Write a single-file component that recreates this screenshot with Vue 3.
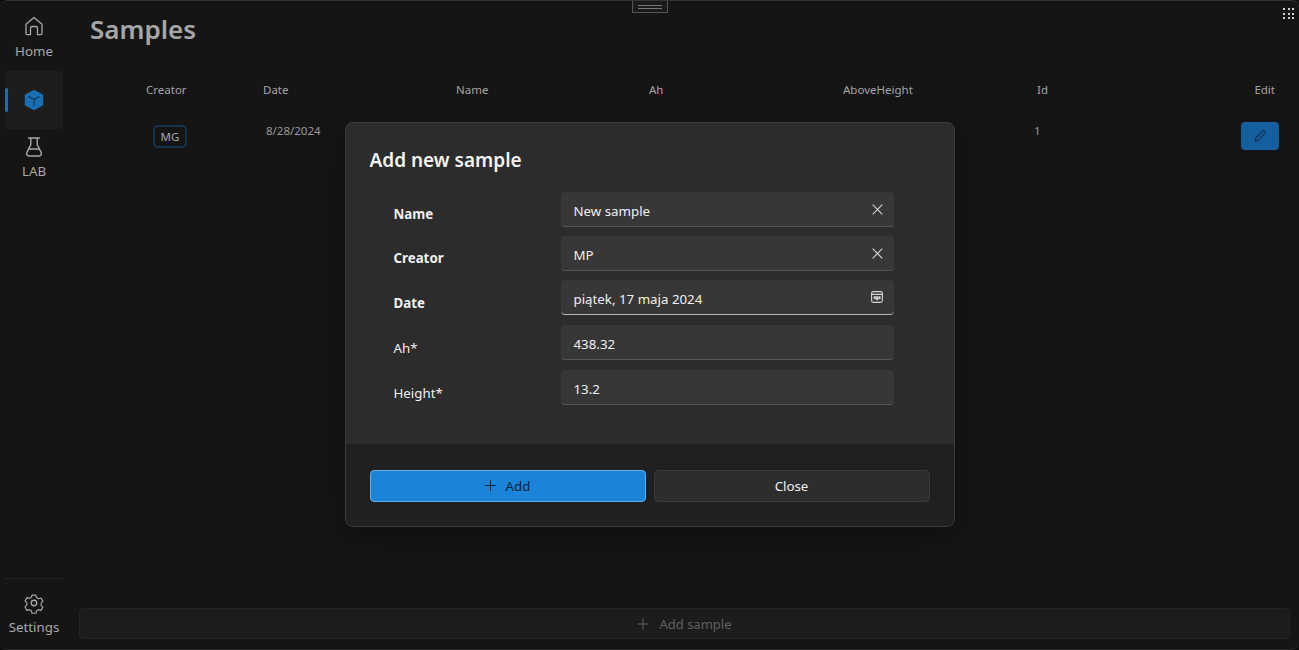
<template>
  <div class="app">
    <aside class="sidebar">
      <div class="nav-top">
        <div class="nav-item home">
          <svg width="22" height="22" viewBox="0 0 22 22" fill="none" stroke="currentColor" stroke-width="1.3" stroke-linejoin="round">
            <path d="M3 9.2 11 2.6l8 6.6v9.1a1.3 1.3 0 0 1-1.3 1.3h-3.2v-6.3a1.8 1.8 0 0 0-1.8-1.8H9.3a1.8 1.8 0 0 0-1.8 1.8v6.3H4.3A1.3 1.3 0 0 1 3 18.3z" />
          </svg>
          <span>Home</span>
        </div>
        <div class="nav-active">
          <i class="indicator"></i>
          <svg width="22" height="22" viewBox="0 0 22 22">
            <path d="M11 .8 20.2 5.8v10.4L11 21.2 1.8 16.2V5.8z" fill="#1a6fb4" />
            <path d="M6 7.6l5 3 5-3M11 10.600v5.600" fill="none" stroke="#0d3a5e" stroke-width="1.3" stroke-linecap="round" />
          </svg>
        </div>
        <div class="nav-item lab">
          <svg width="20" height="22" viewBox="0 0 20 22" fill="none" stroke="currentColor" stroke-width="1.4" stroke-linejoin="round" stroke-linecap="round">
            <path d="M4.5 2h11M6.800 2v6.600L2.900 16.400c-.9 1.900.1 3.600 2.200 3.600h9.800c2.100 0 3.100-1.700 2.200-3.600L13.200 8.600V2M5.200 13h9.600" />
          </svg>
          <span>LAB</span>
        </div>
      </div>
      <div class="nav-bottom">
        <div class="nav-item settings">
          <svg width="22" height="22" viewBox="0 0 24 24" fill="none" stroke="currentColor" stroke-width="1.4" stroke-linejoin="round">
            <circle cx="12" cy="12" r="3" />
            <path d="M9.600 2.400h4.800l.7 3 2.500 1.400 3-.9 2.400 4.100-2.300 2.100v2.800l2.300 2.100-2.400 4.100-3-.9-2.500 1.400-.7 3H9.600l-.7-3-2.500-1.400-3 .9L1 16.500l2.300-2.100v-2.800L1 9.500l2.400-4.100 3 .9 2.500-1.400z" transform="translate(1.300 1.300) scale(.89)" />
          </svg>
          <span>Settings</span>
        </div>
      </div>
    </aside>

    <main class="content">
      <h1 class="page-title">Samples</h1>
      <div class="table-head">
        <span v-for="col in columns" :key="col">{{ col }}</span>
      </div>
      <div class="table-row">
        <span class="badge">MG</span>
        <span class="cell-text">8/28/2024</span>
        <span class="cell-text">1</span>
        <button class="btn-edit">
          <svg width="14" height="14" viewBox="0 0 14 14" fill="none" stroke="#0c3558" stroke-width="1.2" stroke-linejoin="round">
            <path d="M2 12l.7-3L9.600 2.100a1.300 1.300 0 0 1 1.900 0l.4.400a1.300 1.300 0 0 1 0 1.900L5 11.300z" />
          </svg>
        </button>
      </div>
      <div class="spacer"></div>
      <div class="add-bar">
        <svg width="12" height="12" viewBox="0 0 12 12" stroke="currentColor" stroke-width="1"><path d="M6 .5v11M.5 6h11" /></svg>
        <span>Add sample</span>
      </div>
    </main>

    <div class="drag-handle"><i></i><i></i></div>
    <div class="dots">
      <i v-for="n in 9" :key="n"></i>
    </div>

    <div class="overlay">
      <div class="dialog">
        <div class="dialog-body">
          <h2>Add new sample</h2>
          <div v-for="f in fields" :key="f.label" class="form-row">
            <label :class="{ strong: f.strong }">{{ f.label }}</label>
            <div class="field" :class="{ focused: f.icon === 'date' }">
              <span>{{ f.value }}</span>
              <svg v-if="f.icon === 'clear'" width="11" height="11" viewBox="0 0 11 11" stroke="#d0d0d0" stroke-width="1.2"><path d="M.7.7l9.600 9.600M10.300.7.700 10.300" /></svg>
              <svg v-if="f.icon === 'date'" width="12" height="12" viewBox="0 0 12 12" fill="none" stroke="#d8d8d8" stroke-width="1.1">
                <rect x=".6" y=".6" width="10.800" height="10.800" rx="1.800" />
                <path d="M.6 3.400h10.800M3.200 5.800h1v2h-1zM5.600 5.800h1v3h-1zM8 5.800h1v2H8z" />
              </svg>
            </div>
          </div>
        </div>
        <div class="dialog-footer">
          <button class="btn btn-primary">
            <svg width="11" height="11" viewBox="0 0 11 11" stroke="currentColor" stroke-width="1"><path d="M5.500 0v11M0 5.500h11" /></svg>
            <span>Add</span>
          </button>
          <button class="btn btn-close">Close</button>
        </div>
      </div>
    </div>
  </div>
</template>

<script setup>
const columns = ['Creator', 'Date', 'Name', 'Ah', 'AboveHeight', 'Id', 'Edit']

const fields = [
  { label: 'Name', value: 'New sample', strong: true, icon: 'clear' },
  { label: 'Creator', value: 'MP', strong: true, icon: 'clear' },
  { label: 'Date', value: 'piątek, 17 maja 2024', strong: true, icon: 'date' },
  { label: 'Ah*', value: '438.32' },
  { label: 'Height*', value: '13.2' }
]
</script>

<style>
html,
body {
  margin: 0;
  background: #0e0e0e;
}
</style>

<style scoped>
.app {
  position: relative;
  width: 1299px;
  height: 650px;
  display: flex;
  overflow: hidden;
  background: #151515;
  color: #a8a8a8;
  font-family: "Noto Sans", "Open Sans", sans-serif;
  font-size: 11.5px;
  box-sizing: border-box;
  border-top: 1px solid #333;
  border-bottom: 1px solid #2b2b2b;
  border-radius: 8px;
}

.sidebar {
  width: 68px;
  flex-shrink: 0;
  display: flex;
  flex-direction: column;
  justify-content: space-between;
  background: #161514;
}

.nav-top {
  display: flex;
  flex-direction: column;
  align-items: center;
}

.nav-item {
  display: flex;
  flex-direction: column;
  align-items: center;
  font-size: 13.3px;
  line-height: 18px;
}

.nav-item.home {
  height: 70px;
  padding-top: 14px;
  gap: 5px;
  box-sizing: border-box;
}

.nav-item.lab {
  padding-top: 7px;
  gap: 4px;
}

.nav-active {
  position: relative;
  width: 58px;
  height: 58px;
  display: flex;
  align-items: center;
  justify-content: center;
  background: #1f1d1b;
  border-radius: 4px;
}

.indicator {
  position: absolute;
  left: 0;
  top: 17px;
  width: 3px;
  height: 24px;
  border-radius: 2px;
  background: #1a6fb4;
}

.nav-bottom {
  margin: 0 4px;
  border-top: 1px solid #242424;
  height: 71px;
  display: flex;
  justify-content: center;
  padding-top: 13px;
  box-sizing: border-box;
}

.nav-item.settings {
  gap: 4px;
}

.content {
  flex: 1;
  display: flex;
  flex-direction: column;
  padding: 0 9px 10px 0;
  min-width: 0;
}

.page-title {
  margin: 10px 0 0 22px;
  font-size: 26px;
  line-height: 37px;
  font-weight: 600;
  color: #a6a6a6;
}

.table-head {
  display: grid;
  grid-template-columns: 117px 193px 193px 194px 194px 1fr auto;
  padding: 0 15px 0 78px;
  margin-top: 33px;
  line-height: 18px;
  color: #a4a4a4;
}

.table-row {
  display: grid;
  grid-template-columns: 113px 768px 1fr auto;
  padding: 0 11px 0 85px;
  margin-top: 23px;
  align-items: start;
  color: #999;
}

.badge {
  width: 34px;
  height: 23px;
  margin-top: 3px;
  box-sizing: border-box;
  display: flex;
  align-items: center;
  justify-content: center;
  border: 2px solid #17334b;
  border-radius: 5px;
  color: #a8a8a8;
}

.cell-text {
  line-height: 16px;
  margin-top: 1px;
}

.btn-edit {
  width: 38px;
  height: 28px;
  padding: 0;
  display: flex;
  align-items: center;
  justify-content: center;
  border: none;
  border-radius: 4px;
  background: #14609f;
}

.spacer {
  flex: 1;
}

.add-bar {
  margin-left: 11px;
  height: 31px;
  display: flex;
  align-items: center;
  justify-content: center;
  gap: 10px;
  border: 1px solid #232323;
  border-radius: 4px;
  background: #1c1c1c;
  color: #5f5f5f;
  font-size: 13px;
  box-sizing: border-box;
}

.drag-handle {
  position: absolute;
  left: 632px;
  top: -1px;
  width: 36px;
  height: 13px;
  display: flex;
  flex-direction: column;
  align-items: center;
  justify-content: center;
  gap: 2px;
  border: 1px solid #555;
  box-sizing: border-box;
  background: #1b1b1b;
}

.drag-handle i {
  display: block;
  width: 24px;
  height: 1px;
  background: #777;
}

.dots {
  position: absolute;
  right: 5px;
  top: 7px;
  display: grid;
  grid-template-columns: repeat(3, 2px);
  gap: 2.5px;
}

.dots i {
  display: block;
  width: 2px;
  height: 2px;
  background: #d0d0d0;
}

.overlay {
  position: absolute;
  inset: 0 0 2px;
  display: flex;
  align-items: center;
  justify-content: center;
}

.dialog {
  width: 610px;
  height: 405px;
  display: flex;
  flex-direction: column;
  border: 1px solid #3c3c3c;
  border-radius: 8px;
  box-sizing: border-box;
  overflow: hidden;
  background: #2c2c2c;
  color: #fff;
  box-shadow: 0 8px 32px rgba(0, 0, 0, 0.35);
}

.dialog-body {
  flex: 1;
  padding: 24px 60px 0 24px;
}

.dialog-body h2 {
  margin: 0 0 18px;
  font-size: 19px;
  line-height: 27px;
  font-weight: 600;
  color: #f4f4f4;
}

.form-row {
  display: flex;
  height: 35px;
  margin-top: 9px;
  padding-left: 24px;
}

.form-row:nth-of-type(n + 4) {
  margin-top: 10px;
}

.form-row label {
  width: 167px;
  flex-shrink: 0;
  padding-top: 13px;
  font-size: 13.3px;
  line-height: 18px;
  color: #f0f0f0;
}

.form-row:nth-of-type(n + 3) label {
  padding-top: 14px;
}

.form-row label.strong {
  font-weight: 700;
}

.field {
  flex: 1;
  display: flex;
  align-items: center;
  justify-content: space-between;
  padding: 4px 11px 0 13px;
  box-sizing: border-box;
  border-radius: 4px;
  border-bottom: 1px solid #565656;
  background: #373737;
  font-size: 13.3px;
  color: #f0f0f0;
}

.field svg {
  margin-top: -3px;
}

.field.focused {
  border-bottom-color: #b4b4b4;
}

.dialog-footer {
  height: 82px;
  flex-shrink: 0;
  display: flex;
  gap: 8px;
  padding: 26px 24px 0;
  box-sizing: border-box;
  background: #202020;
}

.btn {
  flex: 1;
  height: 32px;
  display: flex;
  align-items: center;
  justify-content: center;
  gap: 10px;
  border-radius: 4px;
  box-sizing: border-box;
  font-family: inherit;
  font-size: 13.3px;
}

.btn-primary {
  border: 1px solid #62aee8;
  background: #1a84d9;
  color: #06233a;
}

.btn-close {
  border: 1px solid #3a3a3a;
  background: #2d2d2d;
  color: #f0f0f0;
}
</style>
